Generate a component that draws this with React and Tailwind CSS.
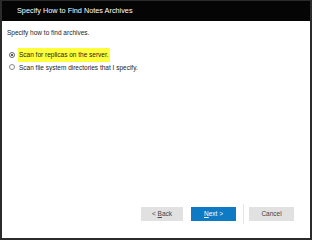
export default function App() {
  return (
    <div className="w-[312px] h-[240px] bg-[#2b2b2b] p-[2px] pt-px flex flex-col" style={{ fontFamily: '"Liberation Sans", Arial, sans-serif' }}>
      <div className="h-[20px] bg-[#050505] text-white text-[7.3px] flex items-center pl-[15px] shrink-0">
        Specify How to Find Notes Archives
      </div>
      <div className="flex-1 bg-white flex flex-col">
        <p className="text-[6.5px] text-[#222] mt-[7px] ml-[5px]">Specify how to find archives.</p>
        <div className="mt-[10px] ml-[7px] flex flex-col gap-[1px] text-[6.5px] text-[#222]">
          <label className="flex items-center">
            <span className="w-[6px] h-[6px] rounded-full border border-[#666] bg-white flex items-center justify-center">
              <span className="w-[2px] h-[2px] rounded-full bg-[#222]" />
            </span>
            <span className="ml-[3px] bg-[#ffff3a] px-[1px] py-[2px]">Scan for replicas on the server.</span>
          </label>
          <label className="flex items-center">
            <span className="w-[6px] h-[6px] rounded-full border border-[#888] bg-white" />
            <span className="ml-[4px]">Scan file system directories that I specify.</span>
          </label>
        </div>
        <div className="mt-auto mb-[14px] flex items-center justify-end pr-[16px] text-[6.5px]">
          <button className="w-[42px] h-[14px] bg-[#e1e1e1] text-[#444]">&lt; <u>B</u>ack</button>
          <button className="ml-[8px] w-[45px] h-[14px] bg-[#0e7ac4] text-white">
            <u>N</u>ext &gt;
          </button>
          <span className="ml-[7px] w-px h-[20px] bg-[#e6e6e6]" />
          <button className="ml-[5px] w-[45px] h-[14px] bg-[#e1e1e1] text-[#444]">Cancel</button>
        </div>
      </div>
    </div>
  );
}
